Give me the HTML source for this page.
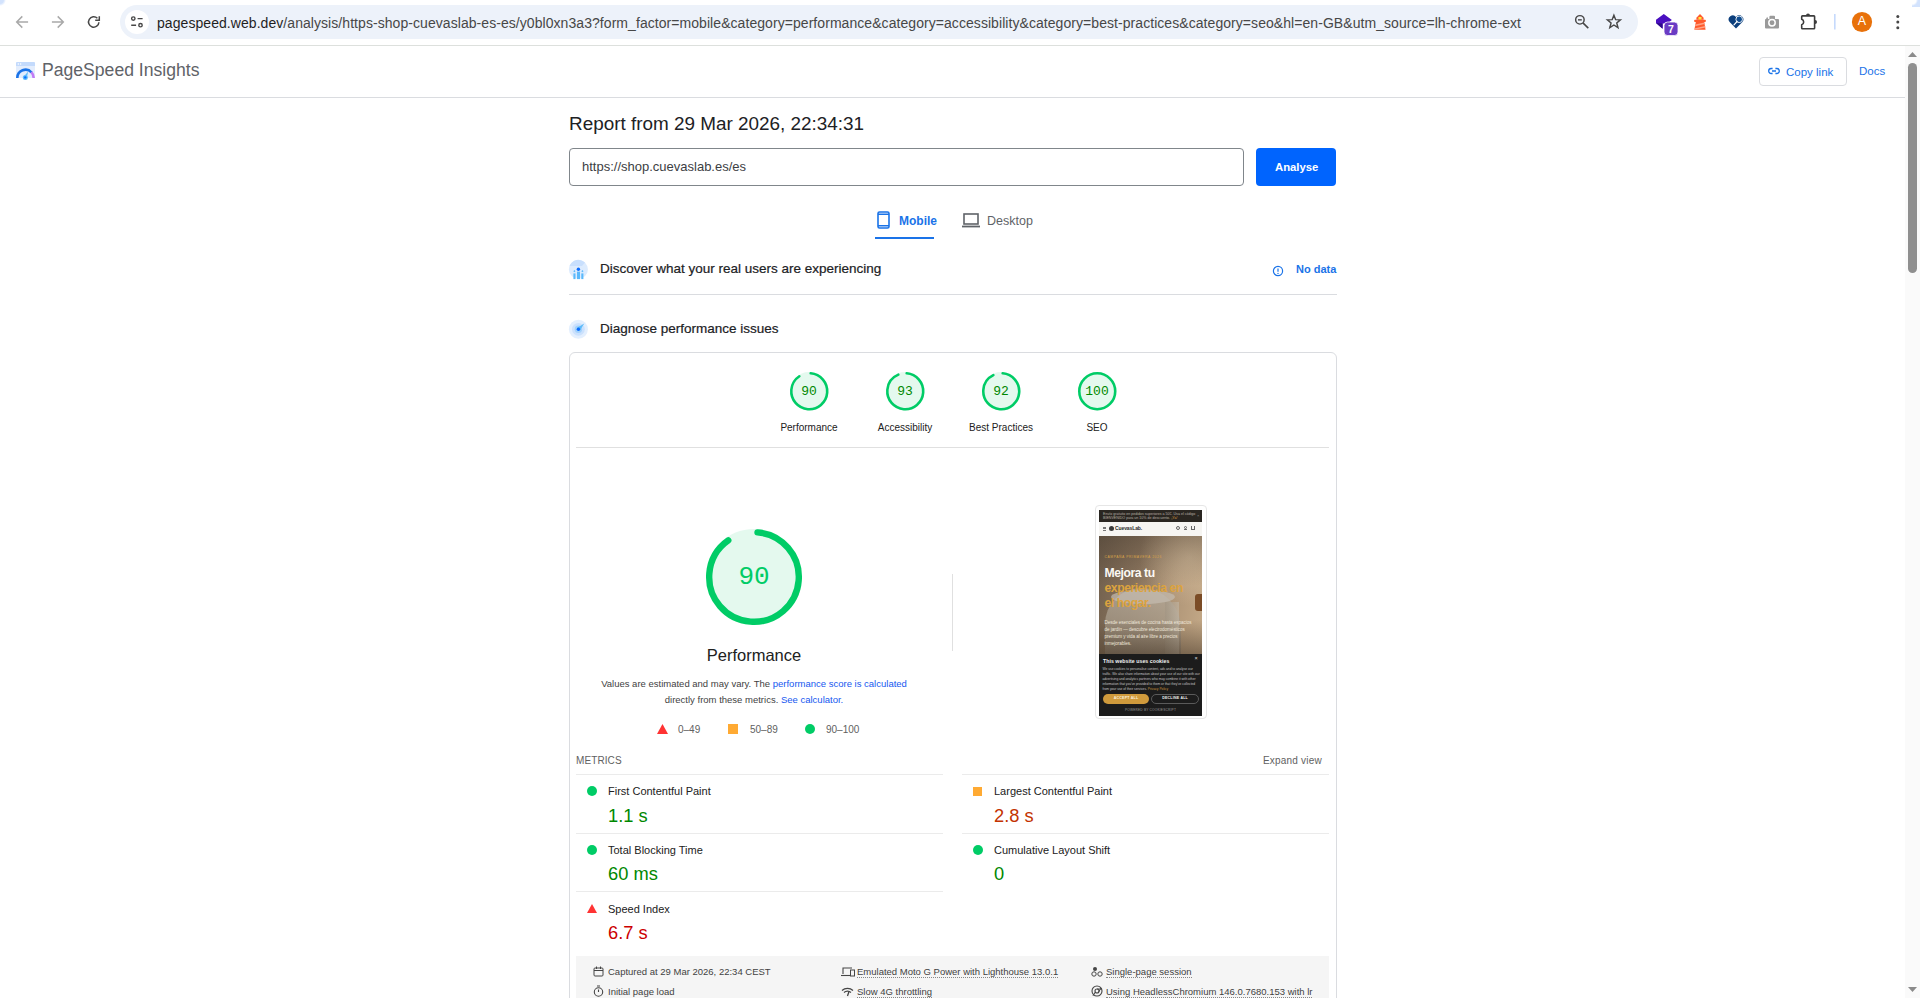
<!DOCTYPE html>
<html><head><meta charset="utf-8">
<style>
*{margin:0;padding:0;box-sizing:border-box}
html,body{width:1920px;height:998px;overflow:hidden;background:#fff;font-family:"Liberation Sans",sans-serif}
.a{position:absolute;white-space:nowrap;line-height:1}
svg{position:absolute;overflow:visible}
</style></head><body>
<!-- browser chrome -->
<div class="a" style="left:0;top:0;width:1920px;height:45px;background:#fff"></div>
<div class="a" style="left:0;top:45px;width:1920px;height:1px;background:#dde0dd"></div>
<div class="a" style="left:0;top:0;width:6px;height:7px;background:radial-gradient(circle at 0 0,#d3e3fd 0,#d3e3fd 3.5px,rgba(211,227,253,0) 6px)"></div>
<div class="a" style="left:1912px;top:0;width:8px;height:7px;background:radial-gradient(circle at 0 0,rgba(211,227,253,0) 0,rgba(211,227,253,0) 4px,#d3e3fd 6px)"></div>
<!-- nav icons -->
<div class="a" style="left:120px;top:5px;width:1518px;height:34px;border-radius:17px;background:#edf2fa"></div>
<div class="a" style="left:125px;top:10px;width:24px;height:24px;border-radius:12px;background:#fff"></div>
<svg style="left:0;top:0" width="1920" height="45" viewBox="0 0 1920 45">
<g fill="none" stroke="#a9a9a9" stroke-width="1.5"><path d="M28.1 22H17.2M22.3 16.4L16.7 22l5.6 5.6"/><path d="M51.9 22h10.9M57.7 16.4l5.6 5.6-5.6 5.6"/></g>
<g fill="none" stroke="#474747" stroke-width="1.5"><path d="M98.9 22.2A5.2 5.2 0 1 1 97.4 18.3"/><path d="M95.2 20.3H99.3V16.2"/></g>
<g fill="none" stroke="#474747" stroke-width="1.4"><circle cx="133.3" cy="18.6" r="1.7"/><path d="M137.6 18.6h5M131.2 25.2h4.9"/><circle cx="140.5" cy="25.2" r="1.7"/></g>
<g fill="none" stroke="#474747"><circle cx="1579.9" cy="19.85" r="4.25" stroke-width="1.45"/><path d="M1578 19.85h3.8" stroke-width="1.4"/><path d="M1582.9 22.9l5.4 5.2" stroke-width="1.6"/></g>
<path d="M1613.9 15.2l1.75 4.45 4.75.25-3.65 3.05 1.2 4.6-4.05-2.55-4.05 2.55 1.2-4.6-3.65-3.05 4.75-.25z" fill="none" stroke="#474747" stroke-width="1.45" stroke-linejoin="miter"/>
<path d="M1656 19.7l7.8-5.7 8.1 6-4.5 3.5h-4.7v5.3L1656 23z" fill="#4a0fc0"/>
<path d="M1656 23.1l6.5 5.7v-5.3z" fill="#2d0a8a"/>
<rect x="1664" y="22" width="14" height="13.6" rx="3.6" fill="#6a3cc4" stroke="#fff" stroke-width=".8"/>
<text x="1671" y="33.1" font-family="Liberation Sans" font-weight="bold" font-size="10.5" fill="#fff" text-anchor="middle">7</text>
<path d="M1700 14l-3.6 3.8v2h7.2v-2z" fill="#ff5a2c"/>
<rect x="1698.5" y="17" width="3" height="2.6" fill="#ffe83a"/>
<rect x="1694.2" y="19.7" width="11.6" height="2.2" rx=".6" fill="#ff5a2c"/>
<path d="M1695.8 21.9h8.4l1.4 7.8h-11.2z" fill="#ff5a2c"/>
<path d="M1695.4 24.4l9-2 .3 1.7-9.6 2.1z" fill="#ffa487"/>
<path d="M1694.9 28.2l10.3-2.3.3 1.6-10.8 2.3z" fill="#ffa487"/>
<path d="M1736 28.6l-6.4-6.6a4 4 0 0 1 6.4-5.1 4 4 0 0 1 6.4 5.1z" fill="#0c3f7c"/>
<circle cx="1739.2" cy="19.3" r="3.3" fill="#104d90" stroke="#fff" stroke-width=".9"/>
<path d="M1737.1 21.5l-3.1 3.3" stroke="#fff" stroke-width="1.2" stroke-linecap="round"/>
<path d="M1765 20a1 1 0 0 1 1-1.1h3.4v-2.2a1 1 0 0 1 1-1h3.6a1 1 0 0 1 1 1v2.2h3a1 1 0 0 1 1 1.1v7.4a1 1 0 0 1-1 1H1766a1 1 0 0 1-1-1z" fill="#9a9a9a"/>
<path d="M1766 18.9l1.2-2.1 1 2.1z" fill="#9a9a9a"/>
<circle cx="1772" cy="22.8" r="3.2" fill="none" stroke="#fff" stroke-width="1.5"/>
<path d="M1802.4 15.9h11.5a.7.7 0 0 1 .7.7v11.5a.7.7 0 0 1-.7.7h-11.5a.7.7 0 0 1-.7-.7v-3.3a2.9 2.9 0 0 0 0-5.5v-2.7a.7.7 0 0 1 .7-.7z" fill="none" stroke="#3c3c3c" stroke-width="1.6" stroke-linejoin="round"/>
<path d="M1806 15.4a2 2 0 0 1 4 0z" fill="#3c3c3c"/><path d="M1815 19.9a2 2 0 0 1 0 4z" fill="#3c3c3c"/>
<rect x="1834" y="14" width="1.6" height="15.5" fill="#c6dafc"/>
<circle cx="1862" cy="22" r="10.1" fill="#e8710a"/>
<circle cx="1897.8" cy="16.4" r="1.5" fill="#474747"/><circle cx="1897.8" cy="22.1" r="1.5" fill="#474747"/><circle cx="1897.8" cy="27.7" r="1.5" fill="#474747"/>
</svg>
<div class="a" id="url" style="left:157px;top:16px;font-size:14px;letter-spacing:0.06px;color:#474747"><span style="color:#1f1f1f">pagespeed.web.dev</span>/analysis/https-shop-cuevaslab-es-es/y0bl0xn3a3?form_factor=mobile&amp;category=performance&amp;category=accessibility&amp;category=best-practices&amp;category=seo&amp;hl=en-GB&amp;utm_source=lh-chrome-ext</div>
<div class="a" style="left:1852px;top:15px;width:20px;text-align:center;font-size:12.5px;color:#fff">A</div>

<!-- scrollbar -->
<div class="a" style="left:1905px;top:46px;width:15px;height:952px;background:#fafafa"></div>
<svg style="left:1908px;top:52px" width="9" height="5" viewBox="0 0 9 5"><path d="M0 5L4.5 0 9 5z" fill="#8a8a8a"/></svg>
<div class="a" style="left:1908px;top:63px;width:9px;height:210px;border-radius:4.5px;background:#8f8f8f"></div>
<svg style="left:1908px;top:987px" width="9" height="5" viewBox="0 0 9 5"><path d="M0 0L4.5 5 9 0z" fill="#8a8a8a"/></svg>

<!-- PSI header -->
<svg style="left:0;top:50px" width="40" height="35" viewBox="0 50 40 35">
<rect x="16" y="62" width="19" height="16" rx="1.2" fill="#e3edfd"/>
<path d="M17.2 62h16.6a1.2 1.2 0 0 1 1.2 1.2V66H16v-2.8a1.2 1.2 0 0 1 1.2-1.2z" fill="#c3dafc"/>
<circle cx="18.3" cy="64" r=".75" fill="#fff"/><circle cx="20.6" cy="64" r=".75" fill="#fff"/>
<path d="M17.3 78A8.2 8.2 0 0 1 31.6 72.5" fill="none" stroke="#1a73e8" stroke-width="2.6"/>
<path d="M31.3 72.2A8.2 8.2 0 0 1 33.7 78" fill="none" stroke="#c17cf5" stroke-width="2.6"/>
<path d="M23.6 76.8l4.6-5.2-1.6 6.6z" fill="#5cbcfb"/>
<circle cx="25.3" cy="77.4" r="2.5" fill="#5cbcfb"/>
<circle cx="25.3" cy="77.4" r="1.2" fill="#0b6cff"/>
</svg>
<div class="a" id="psit" style="left:42px;top:62px;font-size:17.6px;color:#5f6368">PageSpeed Insights</div>
<div class="a" style="left:1759px;top:57px;width:88px;height:29px;border:1px solid #dadce0;border-radius:4px"></div>
<svg style="left:1768px;top:67px" width="12" height="8" viewBox="0 0 12 8"><path d="M4.6 1.5H3.2a2.5 2.5 0 0 0 0 5h1.4M7.4 1.5h1.4a2.5 2.5 0 0 1 0 5H7.4M4 4h4" fill="none" stroke="#1a73e8" stroke-width="1.3"/></svg>
<div class="a" id="copyl" style="left:1786px;top:67px;font-size:11.5px;color:#1a73e8">Copy link</div>
<div class="a" id="docs" style="left:1859px;top:66px;font-size:11.5px;color:#1a73e8">Docs</div>
<div class="a" style="left:0;top:97px;width:1905px;height:1px;background:#dadce0"></div>


<div class="a" id="title" style="left:569px;top:115px;font-size:18.9px;color:#202124">Report from 29 Mar 2026, 22:34:31</div>
<div class="a" style="left:569px;top:148px;width:675px;height:38px;border:1px solid #80868b;border-radius:4px"></div>
<div class="a" id="urlin" style="left:582px;top:160px;font-size:13px;color:#3c4043">https://shop.cuevaslab.es/es</div>
<div class="a" style="left:1256px;top:148px;width:80px;height:38px;border-radius:4px;background:#0064fe"></div>
<div class="a" id="anal" style="left:1275px;top:162px;font-size:11.3px;letter-spacing:0;font-weight:bold;color:#fff">Analyse</div>
<!-- tabs -->
<svg style="left:877px;top:211px" width="13" height="18" viewBox="0 0 13 18"><rect x="1" y="1" width="11" height="16" rx="1.5" fill="none" stroke="#1a73e8" stroke-width="1.6"/><path d="M1 3.2h11M1 14.8h11" stroke="#1a73e8" stroke-width="1.4"/></svg>
<div class="a" id="mob" style="left:899px;top:215px;font-size:12px;font-weight:bold;color:#1a73e8">Mobile</div>
<div class="a" style="left:875px;top:237px;width:59px;height:2px;background:#1a73e8"></div>
<svg style="left:962px;top:213px" width="18" height="15" viewBox="0 0 18 15"><rect x="2" y="1" width="14" height="10" fill="none" stroke="#5f6368" stroke-width="1.6"/><path d="M0 13.5h18" stroke="#5f6368" stroke-width="1.8"/></svg>
<div class="a" id="desk" style="left:987px;top:215px;font-size:12.5px;color:#5f6368">Desktop</div>
<!-- sections -->
<svg style="left:0;top:0" width="600" height="345" viewBox="0 0 600 345">
<circle cx="578.4" cy="269.4" r="9.5" fill="#dcebfe"/>
<path d="M569.5 266a9.5 9.5 0 0 1 15.5-3.5l-3 3.5h-9z" fill="#c8dffd"/>
<g fill="#5ab9fb"><rect x="577" y="271.6" width="3" height="7.5"/><rect x="573.4" y="273.4" width="2.1" height="5.7"/><rect x="581.3" y="273.4" width="2.1" height="5.7"/><path d="M574.4 270.1l1.1 1.1-1.1 1.1-1.1-1.1zM582.4 270.1l1.1 1.1-1.1 1.1-1.1-1.1z"/></g>
<circle cx="578.4" cy="269.2" r="1.7" fill="#0b6cff"/>
<circle cx="578.4" cy="329.3" r="9.5" fill="#e3effe"/>
<circle cx="578.4" cy="329.3" r="6.4" fill="#cbe1fd"/>
<circle cx="578.4" cy="329.3" r="3.7" fill="#a3d2fc"/>
<path d="M576.8 328l7.5-4.6-4.6 7.3z" fill="#5cbcfb"/>
<circle cx="578.4" cy="329.3" r="1.7" fill="#0b6cff"/>
</svg>
<div class="a" id="disc" style="left:600px;top:262px;font-size:13.5px;color:#202124;-webkit-text-stroke:.2px #202124">Discover what your real users are experiencing</div>
<svg style="left:1272px;top:265px" width="12" height="12" viewBox="0 0 12 12"><circle cx="6" cy="6" r="4.6" fill="none" stroke="#1a73e8" stroke-width="1.2"/><path d="M6 3.4v3.4" stroke="#1a73e8" stroke-width="1.2"/><circle cx="6" cy="8.4" r=".7" fill="#1a73e8"/></svg>
<div class="a" id="nodata" style="left:1296px;top:264px;font-size:11px;font-weight:bold;color:#1a73e8">No data</div>
<div class="a" style="left:569px;top:294px;width:768px;height:1px;background:#dadce0"></div>
<div class="a" id="diag" style="left:600px;top:322px;font-size:13.5px;color:#202124;-webkit-text-stroke:.2px #202124">Diagnose performance issues</div>
<!-- card -->
<div class="a" style="left:569px;top:352px;width:768px;height:700px;border:1px solid #dadce0;border-radius:6px"></div>
<svg style="left:789.75px;top:371.75px" width="38.5" height="38.5" viewBox="0 0 120 120"><circle r="56" cx="60" cy="60" stroke-width="8" fill="#0c6" stroke="#0c6" opacity=".1"/><circle r="56" cx="60" cy="60" stroke-width="8" fill="none" stroke="#0c6" stroke-linecap="round" stroke-dasharray="312.67 351.86" transform="rotate(-85.5 60 60)"/></svg><div class="a" id="g0" style="left:789.50px;top:384.50px;width:39px;text-align:center;font-family:'Liberation Mono',monospace;font-size:13px;color:#080">90</div><div class="a" id="gl0" style="left:759px;top:423px;width:100px;text-align:center;font-size:10px;color:#212121">Performance</div><svg style="left:885.75px;top:371.75px" width="38.5" height="38.5" viewBox="0 0 120 120"><circle r="56" cx="60" cy="60" stroke-width="8" fill="#0c6" stroke="#0c6" opacity=".1"/><circle r="56" cx="60" cy="60" stroke-width="8" fill="none" stroke="#0c6" stroke-linecap="round" stroke-dasharray="323.23 351.86" transform="rotate(-85.5 60 60)"/></svg><div class="a" id="g1" style="left:885.50px;top:384.50px;width:39px;text-align:center;font-family:'Liberation Mono',monospace;font-size:13px;color:#080">93</div><div class="a" id="gl1" style="left:855px;top:423px;width:100px;text-align:center;font-size:10px;color:#212121">Accessibility</div><svg style="left:981.75px;top:371.75px" width="38.5" height="38.5" viewBox="0 0 120 120"><circle r="56" cx="60" cy="60" stroke-width="8" fill="#0c6" stroke="#0c6" opacity=".1"/><circle r="56" cx="60" cy="60" stroke-width="8" fill="none" stroke="#0c6" stroke-linecap="round" stroke-dasharray="319.71 351.86" transform="rotate(-85.5 60 60)"/></svg><div class="a" id="g2" style="left:981.50px;top:384.50px;width:39px;text-align:center;font-family:'Liberation Mono',monospace;font-size:13px;color:#080">92</div><div class="a" id="gl2" style="left:951px;top:423px;width:100px;text-align:center;font-size:10px;color:#212121">Best Practices</div><svg style="left:1077.75px;top:371.75px" width="38.5" height="38.5" viewBox="0 0 120 120"><circle r="56" cx="60" cy="60" stroke-width="8" fill="#0c6" stroke="#0c6" opacity=".1"/><circle r="56" cx="60" cy="60" stroke-width="8" fill="none" stroke="#0c6"/></svg><div class="a" id="g3" style="left:1077.50px;top:384.50px;width:39px;text-align:center;font-family:'Liberation Mono',monospace;font-size:13px;color:#080">100</div><div class="a" id="gl3" style="left:1047px;top:423px;width:100px;text-align:center;font-size:10px;color:#212121">SEO</div><div class="a" style="left:576px;top:447px;width:753px;height:1px;background:#e0e0e0"></div><svg style="left:706.00px;top:528.60px" width="96" height="96" viewBox="0 0 120 120"><circle r="56" cx="60" cy="60" stroke-width="8" fill="#0c6" stroke="#0c6" opacity=".1"/><circle r="56" cx="60" cy="60" stroke-width="8" fill="none" stroke="#0c6" stroke-linecap="round" stroke-dasharray="312.67 351.86" transform="rotate(-85.5 60 60)"/></svg><div class="a" id="bigg" style="left:706.00px;top:563.60px;width:96px;text-align:center;font-family:'Liberation Mono',monospace;font-size:26px;color:#0c6">90</div>
<div class="a" id="bigl" style="left:654px;top:647px;width:200px;text-align:center;font-size:16.5px;color:#212121">Performance</div>
<div class="a" id="desc1" style="left:554px;top:679px;width:400px;text-align:center;font-size:9.5px;color:#424242">Values are estimated and may vary. The <span style="color:#1558f0">performance score is calculated</span></div>
<div class="a" id="desc2" style="left:554px;top:695px;width:400px;text-align:center;font-size:9.5px;color:#424242">directly from these metrics. <span style="color:#1558f0">See calculator.</span></div>
<svg style="left:657px;top:724px" width="11" height="10" viewBox="0 0 11 10"><path d="M5.5 0L11 10H0z" fill="#f33"/></svg>
<div class="a" id="leg1" style="left:678px;top:725px;font-size:10px;color:#616161">0–49</div>
<div class="a" style="left:728px;top:724px;width:10px;height:10px;background:#fa3"></div>
<div class="a" id="leg2" style="left:750px;top:725px;font-size:10px;color:#616161">50–89</div>
<div class="a" style="left:805px;top:724px;width:10px;height:10px;border-radius:5px;background:#0c6"></div>
<div class="a" id="leg3" style="left:826px;top:725px;font-size:10px;color:#616161">90–100</div>
<div class="a" style="left:952px;top:574px;width:1px;height:77px;background:#e0e0e0"></div>

<div class="a" style="left:1095px;top:505px;width:112px;height:214px;border:1px solid #e6e6e6;border-radius:4px;background:#fff"></div>
<div class="a" style="left:1099px;top:510px;width:103px;height:206px;overflow:hidden;background:#1c1c1c">
 <div class="a" style="left:0;top:0;width:103px;height:11.5px;background:#2a2621"></div>
 <div class="a" style="left:4px;top:2px;font-size:3.6px;line-height:4.2px;color:#b8b0a4">Envío gratuito en pedidos superiores a 50€. Usa el código<br>BIENVENIDO para un 10% de descuento. <span style="color:#d9a040">¡Ya!</span></div>
 <div class="a" style="left:98px;top:4px;font-size:4px;color:#888">×</div>
 <div class="a" style="left:0;top:11.5px;width:103px;height:14.5px;background:#f6f5f2"></div>
 <div class="a" style="left:3.5px;top:16.5px;width:3.5px;height:4px;border-top:1px solid #777;border-bottom:1px solid #777"></div>
 <div class="a" style="left:3.5px;top:18.2px;width:3.5px;height:.8px;background:#777"></div>
 <div class="a" style="left:9.5px;top:15.6px;width:5px;height:5px;border-radius:3px;background:#3a3a3a"></div>
 <div class="a" style="left:16px;top:16.2px;font-size:5px;font-weight:bold;color:#2a2a2a;letter-spacing:-.1px">CuevasLab.</div>
 <div class="a" style="left:76.5px;top:15.5px;width:4px;height:4px;border:.8px solid #666;border-radius:2px"></div>
 <div class="a" style="left:85px;top:16px;width:2.5px;height:2.5px;border:.7px solid #666;border-radius:2px"></div>
 <div class="a" style="left:84.5px;top:18.8px;width:3.5px;height:1.6px;border:.7px solid #666;border-bottom:none;border-radius:2px 2px 0 0"></div>
 <div class="a" style="left:92px;top:16px;width:4px;height:3.5px;border:.8px solid #666;border-top:none"></div>
 <div class="a" style="left:0;top:26px;width:103px;height:118px;background:linear-gradient(100deg,#6f5e4c 0%,#8a745d 35%,#b09678 70%,#c5aa88 100%)"></div>
 <div class="a" style="left:40px;top:26px;width:63px;height:70px;background:radial-gradient(ellipse at 80% 30%,rgba(214,190,158,.75),rgba(214,190,158,0) 70%)"></div>
 <div class="a" style="left:6px;top:78px;width:76px;height:80px;border-radius:36px 40px 0 0;background:linear-gradient(180deg,#b8ae9f 0%,#a79b8a 40%,#857a6b 100%);opacity:.75"></div>
 <div class="a" style="left:12px;top:80px;width:64px;height:14px;border-radius:50%;background:#c4bcb0;opacity:.7"></div>
 <div class="a" style="left:66px;top:92px;width:14px;height:52px;background:linear-gradient(90deg,#a09482,#c2b8a8);opacity:.6"></div>
 <div class="a" style="left:96px;top:84px;width:7px;height:17px;border-radius:3px 0 0 3px;background:#7b4c26"></div>
 <div class="a" style="left:0;top:110px;width:103px;height:34px;background:linear-gradient(180deg,rgba(70,55,40,0),rgba(70,55,40,.55))"></div>
 <div class="a" style="left:0;top:26px;width:103px;height:50px;background:linear-gradient(180deg,rgba(60,50,40,.35),rgba(60,50,40,0))"></div>
 <div class="a" style="left:5.5px;top:45.5px;font-size:3.4px;letter-spacing:.55px;color:#d6a24a">CAMPAÑA PRIMAVERA 2026</div>
 <div class="a" style="left:5.5px;top:57px;font-size:12.2px;font-weight:bold;color:#fbf8f3;letter-spacing:-.45px">Mejora tu</div>
 <div class="a" style="left:5.5px;top:72.3px;font-size:12.2px;font-weight:bold;color:#dca33e;letter-spacing:-.45px">experiencia en</div>
 <div class="a" style="left:5.5px;top:86.5px;font-size:12.2px;font-weight:bold;color:#dca33e;letter-spacing:-.45px">el hogar.</div>
 <div class="a" style="left:5.5px;top:108.6px;font-size:4.6px;line-height:7.2px;color:#eee6da;letter-spacing:-.05px">Desde esenciales de cocina hasta espacios<br>de jardín — descubre electrodomésticos<br>premium y vida al aire libre a precios<br>inmejorables.</div>
 <div class="a" style="left:0;top:143.6px;width:103px;height:63px;background:#1c1c1c"></div>
 <div class="a" style="left:4px;top:148.6px;font-size:5.2px;font-weight:bold;color:#f2f2f2;letter-spacing:.05px">This website uses cookies</div>
 <div class="a" style="left:95.5px;top:146.2px;font-size:5.5px;color:#ddd">×</div>
 <div class="a" style="left:3.5px;top:157.2px;font-size:3.25px;line-height:4.9px;color:#c4c4c4">We use cookies to personalise content, ads and to analyse our<br>traffic. We also share information about your use of our site with our<br>advertising and analytics partners who may combine it with other<br>information that you've provided to them or that they've collected<br>from your use of their services. <span style="color:#c8953c">Privacy Policy</span></div>
 <div class="a" style="left:4px;top:183.5px;width:46px;height:10px;border-radius:5px;background:#cf9a3c"></div>
 <div class="a" style="left:4px;top:186.6px;width:46px;text-align:center;font-size:3.6px;font-weight:bold;color:#fbf0dc;letter-spacing:.2px">ACCEPT ALL</div>
 <div class="a" style="left:52.4px;top:183.5px;width:47.4px;height:10px;border-radius:5px;border:.8px solid #5a5a5a"></div>
 <div class="a" style="left:52.4px;top:186.6px;width:47.4px;text-align:center;font-size:3.6px;font-weight:bold;color:#f0f0f0;letter-spacing:.2px">DECLINE ALL</div>
 <div class="a" style="left:0;top:199.2px;width:103px;text-align:center;font-size:3.2px;color:#9a9a9a;letter-spacing:.2px">POWERED BY COOKIESCRIPT</div>
</div>
<div class="a" id="metl" style="left:576px;top:756px;font-size:10px;letter-spacing:.1px;color:#616161">METRICS</div>
<div class="a" id="expv" style="left:1263px;top:756px;font-size:10px;letter-spacing:.2px;color:#616161">Expand view</div>
<div class="a" style="left:576px;top:774px;width:367px;height:1px;background:#ebebeb"></div>
<div class="a" style="left:962px;top:774px;width:367px;height:1px;background:#ebebeb"></div>
<div class="a" style="left:576px;top:833px;width:367px;height:1px;background:#ebebeb"></div>
<div class="a" style="left:962px;top:833px;width:367px;height:1px;background:#ebebeb"></div>
<div class="a" style="left:576px;top:891px;width:367px;height:1px;background:#ebebeb"></div>
<div class="a" style="left:587px;top:786px;width:10px;height:10px;border-radius:5px;background:#0c6"></div>
<div class="a" id="m1" style="font-size:11px;left:608px;top:786px;color:#212121">First Contentful Paint</div>
<div class="a" id="v1" style="left:608px;top:807px;font-size:18.3px;color:#080">1.1 s</div>
<div class="a" style="left:973px;top:787px;width:9px;height:9px;background:#fa3"></div>
<div class="a" id="m2" style="font-size:11px;left:994px;top:786px;color:#212121">Largest Contentful Paint</div>
<div class="a" id="v2" style="left:994px;top:807px;font-size:18.3px;color:#c33300">2.8 s</div>
<div class="a" style="left:587px;top:845px;width:10px;height:10px;border-radius:5px;background:#0c6"></div>
<div class="a" id="m3" style="font-size:11px;left:608px;top:845px;color:#212121">Total Blocking Time</div>
<div class="a" id="v3" style="left:608px;top:865px;font-size:18.3px;color:#080">60 ms</div>
<div class="a" style="left:973px;top:845px;width:10px;height:10px;border-radius:5px;background:#0c6"></div>
<div class="a" id="m4" style="font-size:11px;left:994px;top:845px;color:#212121">Cumulative Layout Shift</div>
<div class="a" id="v4" style="left:994px;top:865px;font-size:18.3px;color:#080">0</div>
<svg style="left:587px;top:904px" width="10" height="9" viewBox="0 0 10 9"><path d="M5 0L10 9H0z" fill="#f33"/></svg>
<div class="a" id="m5" style="font-size:11px;left:608px;top:904px;color:#212121">Speed Index</div>
<div class="a" id="v5" style="left:608px;top:924px;font-size:18.3px;color:#c00">6.7 s</div>
<div class="a" style="left:576px;top:956px;width:753px;height:60px;background:#f5f5f5"></div>

<svg style="left:593px;top:966px" width="11" height="11" viewBox="0 0 11 11"><rect x="1" y="2" width="9" height="8" rx="1" fill="none" stroke="#454545" stroke-width="1"/><path d="M1 4.5h9M3.5 .5v2.5M7.5 .5v2.5" stroke="#454545" stroke-width="1"/></svg>
<div class="a" id="f1" style="left:608px;top:967px;font-size:9.5px;color:#424242">Captured at 29 Mar 2026, 22:34 CEST</div>
<svg style="left:593px;top:985px" width="11" height="12" viewBox="0 0 11 12"><circle cx="5.5" cy="7" r="4.2" fill="none" stroke="#454545" stroke-width="1.1"/><path d="M4 1h3M5.5 4.5v2.5" stroke="#454545" stroke-width="1.1"/></svg>
<div class="a" id="f2" style="left:608px;top:987px;font-size:9.5px;color:#424242">Initial page load</div>
<svg style="left:841px;top:966px" width="14" height="11" viewBox="0 0 14 11"><path d="M2 8V2h9" fill="none" stroke="#454545" stroke-width="1.1"/><rect x="9.5" y="4" width="4" height="6" fill="none" stroke="#454545" stroke-width="1"/><path d="M0 9.5h9" stroke="#454545" stroke-width="1.1"/></svg>
<div class="a" id="f3" style="left:857px;top:967px;font-size:9.5px;color:#424242;border-bottom:1px dotted #888;padding-bottom:0">Emulated Moto G Power with Lighthouse 13.0.1</div>
<svg style="left:841px;top:986px" width="13" height="11" viewBox="0 0 13 11"><path d="M1 4.5a8 8 0 0 1 11 0M3 6.5a5 5 0 0 1 7 0" fill="none" stroke="#454545" stroke-width="1.2"/><path d="M6.5 10L8 5.5" stroke="#454545" stroke-width="1.3"/></svg>
<div class="a" id="f4" style="left:857px;top:987px;font-size:9.5px;color:#424242;border-bottom:1px dotted #888">Slow 4G throttling</div>
<svg style="left:1091px;top:966px" width="12" height="11" viewBox="0 0 12 11"><circle cx="4" cy="3" r="2" fill="#454545"/><circle cx="3" cy="8" r="2.2" fill="none" stroke="#454545" stroke-width="1"/><circle cx="9" cy="8" r="2.2" fill="none" stroke="#454545" stroke-width="1"/></svg>
<div class="a" id="f5" style="left:1106px;top:967px;font-size:9.5px;color:#424242;border-bottom:1px dotted #888">Single-page session</div>
<svg style="left:1091px;top:985px" width="12" height="12" viewBox="0 0 12 12"><circle cx="6" cy="6" r="5" fill="none" stroke="#454545" stroke-width="1.1"/><circle cx="6" cy="6" r="2" fill="none" stroke="#454545" stroke-width="1.1"/><path d="M6 4h4.6M4.3 7l-2.3 3.8M7.7 7l2.3-4" stroke="#454545" stroke-width="1"/></svg>
<div class="a" id="f6" style="left:1106px;top:987px;font-size:9.5px;color:#424242;border-bottom:1px dotted #888">Using HeadlessChromium 146.0.7680.153 with lr</div>


</body></html>
